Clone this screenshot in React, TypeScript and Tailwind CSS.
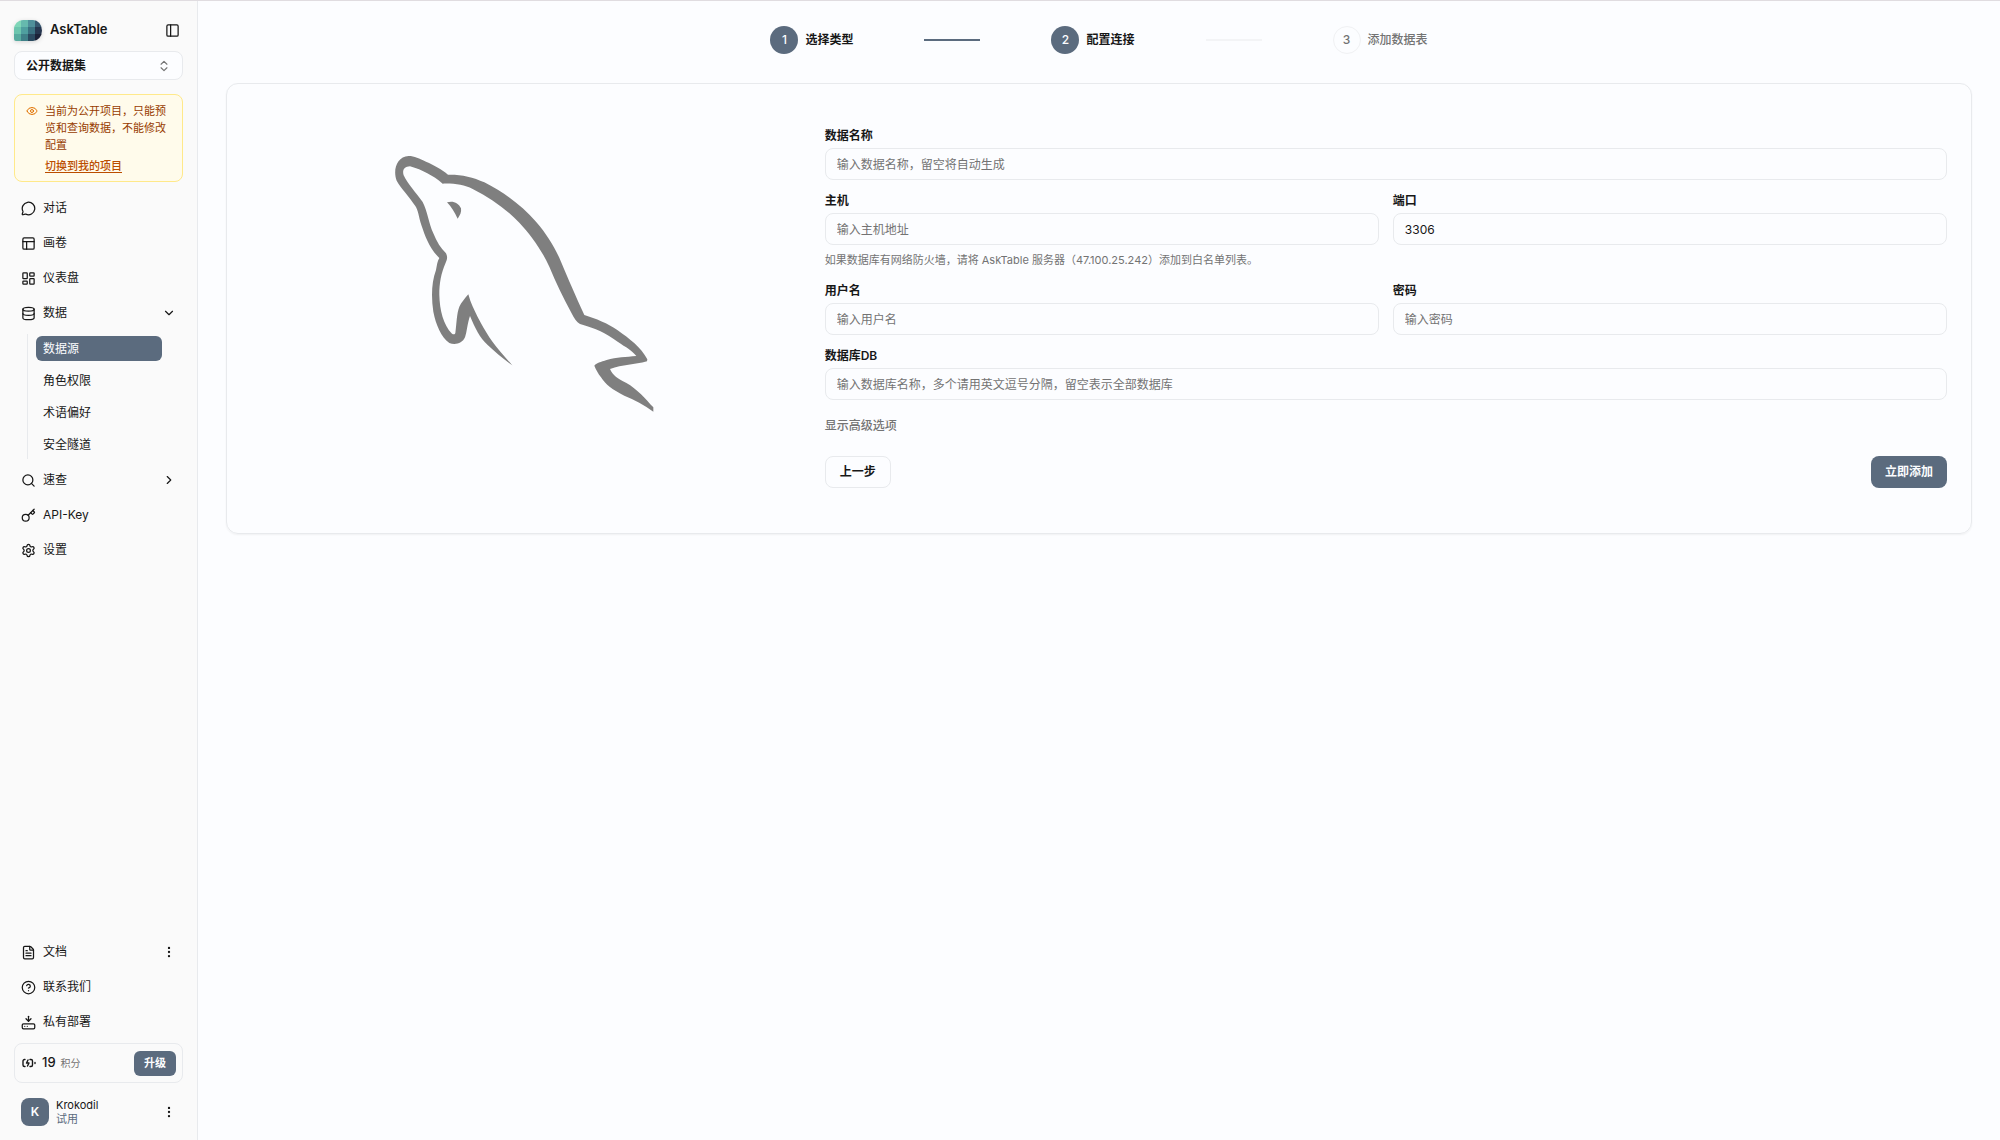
import type { ReactNode } from "react";
import {
  ChevronDown,
  ChevronRight,
  ChevronsUpDown,
  CircleHelp,
  Database,
  EllipsisVertical,
  Eye,
  FileText,
  HardDriveDownload,
  Key,
  LayoutDashboard,
  MessageCircle,
  PanelLeft,
  PanelsTopLeft,
  Search,
  Settings,
} from "lucide-react";
import type { LucideIcon } from "lucide-react";

const logoCells = [
  ["#7fd6b8", "#66b9ae", "#4f8f9a", "#35566e"],
  ["#6cc5ae", "#4f9f9f", "#3a7080", "#26364f"],
  ["#57ab9f", "#3f8088", "#2b4a60", "#1c2238"],
];

const Logo = () => (
  <svg viewBox="0 0 28 21" className="w-7 h-[21px] drop-shadow-sm" aria-hidden="true">
    <defs>
      <clipPath id="logo-shape">
        <path d="M9 0H19A9 10.5 0 0 1 19 21H2A2 2 0 0 1 0 19V9A9 9 0 0 1 9 0Z" />
      </clipPath>
    </defs>
    <g clipPath="url(#logo-shape)">
      {logoCells.map((row, y) =>
        row.map((fill, x) => (
          <rect key={`${x}-${y}`} x={x * 7} y={y * 7} width="7.2" height="7.2" fill={fill} />
        ))
      )}
    </g>
  </svg>
);

const Dolphin = () => (
  <svg viewBox="17 0 900 870" className="w-[300px] h-[290px] fill-[#7f7f7f]" aria-hidden="true">
    <path
      fillRule="evenodd"
      d="M118 48C135 48 150 56 170 65C195 76 215 86 236 104C275 103 310 111 345 127C410 160 460 200 500 245C535 285 558 325 575 365C598 420 618 465 645 525C680 536 715 550 745 571C780 596 815 622 834 658L833 664C795 675 760 673 722 687C730 706 745 716 770 728C805 748 828 776 852 802V815C825 795 795 779 765 767C730 750 708 733 695 712C686 699 680 690 675 677C680 670 695 665 712 660C742 651 770 651 801 648C790 632 770 622 745 605C710 580 680 565 632 552C622 546 614 534 606 518C580 470 560 428 540 380C520 335 485 285 450 248C410 207 365 175 310 147C285 134 255 130 220 131C190 106 160 90 122 79C105 80 98 90 103 106C115 132 140 158 160 186C175 215 178 250 192 280C202 306 215 325 230 340C235 350 234 357 229 368C215 400 210 430 210 465C211 510 222 555 248 581C253 584 257 583 258 579C262 550 262 520 270 500C276 488 285 477 297 463L303 482C320 525 345 570 370 606C385 627 405 648 429 676C400 656 378 636 355 615C330 592 318 565 302 528C294 550 293 575 287 592C279 611 257 616 240 609C215 590 200 555 192 515C185 470 187 425 200 390C203 375 204 363 210 354C180 325 168 290 156 255C148 230 147 212 138 198C120 170 95 145 82 122C70 90 82 50 118 48Z"
    />
    <path d="M233 187C250 181 268 188 275 205C277 217 272 226 265 236C256 217 246 200 233 187Z" />
  </svg>
);

// battery style mark shown in front of the credit balance
const CreditIcon = () => (
  <svg
    viewBox="0 0 28 20"
    className="w-[14px] h-[10px] shrink-0"
    fill="none"
    stroke="currentColor"
    strokeWidth="2.8"
    strokeLinecap="round"
    strokeLinejoin="round"
    aria-hidden="true"
  >
    <path d="M6 3H5A3 3 0 0 0 2 6v8a3 3 0 0 0 3 3h1M16 3h2a3 3 0 0 1 3 3v8a3 3 0 0 1-3 3h-2M26 9v2M12 4l-3 6h5l-3 6" />
  </svg>
);

interface NavItemProps {
  icon: LucideIcon;
  label: string;
  trailing?: ReactNode;
}

const NavItem = ({ icon: Icon, label, trailing }: NavItemProps) => (
  <a href="#" className="flex items-center gap-[7px] h-7 px-[7px] text-xs">
    <Icon className="w-[15px] h-[15px] shrink-0" />
    <span className="flex-1">{label}</span>
    {trailing}
  </a>
);

const subItems = ["数据源", "角色权限", "术语偏好", "安全隧道"];

const Sidebar = () => (
  <aside className="flex flex-col w-[198px] shrink-0 bg-[#fafafa] border-r border-[#e8eaed] px-[14px] pt-[17px] pb-[14px]">
    <div className="flex items-center gap-2 h-6">
      <Logo />
      <span className="flex-1 text-[13px] font-semibold">AskTable</span>
      <button type="button" aria-label="Toggle sidebar" className="mr-[3px]">
        <PanelLeft className="w-[15px] h-[15px]" />
      </button>
    </div>

    <button
      type="button"
      className="flex items-center justify-between mt-[9px] h-[29px] shrink-0 px-[11px] rounded-lg border border-[#e8eaed] bg-[#fcfdff] text-xs font-semibold"
    >
      公开数据集
      <ChevronsUpDown className="w-[14px] h-[14px] text-[#737373]" />
    </button>

    <div className="flex gap-[7px] mt-[14px] px-[11px] pt-2 pb-[6px] rounded-lg border border-[#ffe98a] bg-[#fffbeb] text-[11px] leading-[17px]">
      <Eye className="w-3 h-3 mt-[2px] shrink-0 text-[#e17100]" />
      <div>
        <p className="text-[#973c00]">当前为公开项目，只能预览和查询数据，不能修改配置</p>
        <a href="#" className="block mt-1 font-medium text-[#bb4d00] underline underline-offset-2">
          切换到我的项目
        </a>
      </div>
    </div>

    <nav className="flex flex-col gap-[7px] mt-3">
      <NavItem icon={MessageCircle} label="对话" />
      <NavItem icon={PanelsTopLeft} label="画卷" />
      <NavItem icon={LayoutDashboard} label="仪表盘" />
      <NavItem icon={Database} label="数据" trailing={<ChevronDown className="w-[14px] h-[14px]" />} />
      <div className="flex flex-col gap-[7px] ml-[13px] mr-[21px] py-[2px] pl-2 border-l border-[#e8eaed]">
        {subItems.map((label, i) => (
          <a
            key={label}
            href="#"
            className={`flex items-center h-[25px] px-[7px] rounded-md text-xs ${
              i === 0 ? "bg-[#5b6b7e] text-[#fcfdff]" : ""
            }`}
          >
            {label}
          </a>
        ))}
      </div>
      <NavItem icon={Search} label="速查" trailing={<ChevronRight className="w-[14px] h-[14px]" />} />
      <NavItem icon={Key} label="API-Key" />
      <NavItem icon={Settings} label="设置" />
    </nav>

    <div className="flex flex-col gap-[7px] mt-auto">
      <NavItem icon={FileText} label="文档" trailing={<EllipsisVertical className="w-[14px] h-[14px]" />} />
      <NavItem icon={CircleHelp} label="联系我们" />
      <NavItem icon={HardDriveDownload} label="私有部署" />
      <div className="flex items-center h-10 pl-[7px] pr-[6px] rounded-lg border border-[#e8eaed]">
        <CreditIcon />
        <span className="ml-[6px] text-[13px] font-medium">19</span>
        <span className="ml-[5px] text-[10px] text-[#737373]">积分</span>
        <button
          type="button"
          className="ml-auto h-[25px] px-[10px] rounded-md bg-[#5b6b7e] text-[11px] font-semibold text-[#fcfdff]"
        >
          升级
        </button>
      </div>
      <div className="flex items-center gap-[7px] mt-2 px-[7px]">
        <div className="flex items-center justify-center w-7 h-7 rounded-lg bg-[#5b6b7e] text-xs font-semibold text-[#fcfdff]">
          K
        </div>
        <div className="flex-1 text-[11px] leading-[14px]">
          <p>Krokodil</p>
          <p className="text-[#5b6b7e]">试用</p>
        </div>
        <button type="button" aria-label="Account menu">
          <EllipsisVertical className="w-[14px] h-[14px]" />
        </button>
      </div>
    </div>
  </aside>
);

const steps = [
  { label: "选择类型", reached: true },
  { label: "配置连接", reached: true },
  { label: "添加数据表", reached: false },
];

const Stepper = () => (
  <ol className="flex items-center justify-center gap-[71px] h-7 text-xs font-medium">
    {steps.map(({ label, reached }, i) => (
      <li key={label} className="flex items-center gap-[71px]">
        {i > 0 && <span className={`w-14 h-[2px] ${i === 1 ? "bg-[#5b6b7e]" : "bg-[#f3f4f6]"}`} />}
        <span className={`flex items-center gap-[7px] ${reached ? "font-semibold" : "text-[#737373]"}`}>
          <span
            className={`flex items-center justify-center w-7 h-7 rounded-full font-medium ${
              reached ? "bg-[#5b6b7e] text-[#fcfdff]" : "border border-[#f0f1f3]"
            }`}
          >
            {i + 1}
          </span>
          {label}
        </span>
      </li>
    ))}
  </ol>
);

interface FieldProps {
  id: string;
  label: string;
  type?: string;
  placeholder?: string;
  value?: string;
  hint?: string;
}

const Field = ({ id, label, type = "text", placeholder, value, hint }: FieldProps) => (
  <div className="flex flex-col gap-[5px]">
    <label htmlFor={id} className="text-xs leading-[14px] font-semibold">
      {label}
    </label>
    <input
      id={id}
      type={type}
      placeholder={placeholder}
      defaultValue={value}
      className="w-full h-8 px-[11px] rounded-lg border border-[#e8eaed] text-xs placeholder:text-[#737373]"
    />
    {hint && <p className="text-[11px] leading-[20px] text-[#737373]">{hint}</p>}
  </div>
);

const ConnectionForm = () => (
  <form className="col-span-2 flex flex-col gap-[14px] py-[21px]">
    <Field id="name" label="数据名称" placeholder="输入数据名称，留空将自动生成" />
    <div className="grid grid-cols-2 gap-[14px]">
      <Field
        id="host"
        label="主机"
        placeholder="输入主机地址"
        hint="如果数据库有网络防火墙，请将 AskTable 服务器（47.100.25.242）添加到白名单列表。"
      />
      <Field id="port" label="端口" value="3306" />
    </div>
    <div className="grid grid-cols-2 gap-[14px]">
      <Field id="user" label="用户名" placeholder="输入用户名" />
      <Field id="password" label="密码" type="password" placeholder="输入密码" />
    </div>
    <Field id="db" label="数据库DB" placeholder="输入数据库名称，多个请用英文逗号分隔，留空表示全部数据库" />
    <button type="button" className="self-start mt-[3px] text-xs leading-[18px] font-medium text-[#737373]">
      显示高级选项
    </button>
    <div className="flex justify-between mt-[7px]">
      <button type="button" className="h-8 px-[14px] rounded-lg border border-[#e8eaed] text-xs font-semibold">
        上一步
      </button>
      <button type="submit" className="h-8 px-[14px] rounded-lg bg-[#5b6b7e] text-xs font-semibold text-[#fcfdff]">
        立即添加
      </button>
    </div>
  </form>
);

const App = () => (
  <div className="flex min-h-screen border-t border-[#e0dce0] bg-[#fcfdff] text-[#171717] font-['Inter','Noto_Sans_CJK_SC',sans-serif]">
    <Sidebar />
    <main className="flex-1 px-7 pt-[25px]">
      <Stepper />
      <section className="grid grid-cols-3 gap-[25px] mt-[29px] p-6 rounded-xl border border-[#e8eaed] shadow-xs">
        <div className="flex items-start justify-center pt-8">
          <Dolphin />
        </div>
        <ConnectionForm />
      </section>
    </main>
  </div>
);

export default App;
